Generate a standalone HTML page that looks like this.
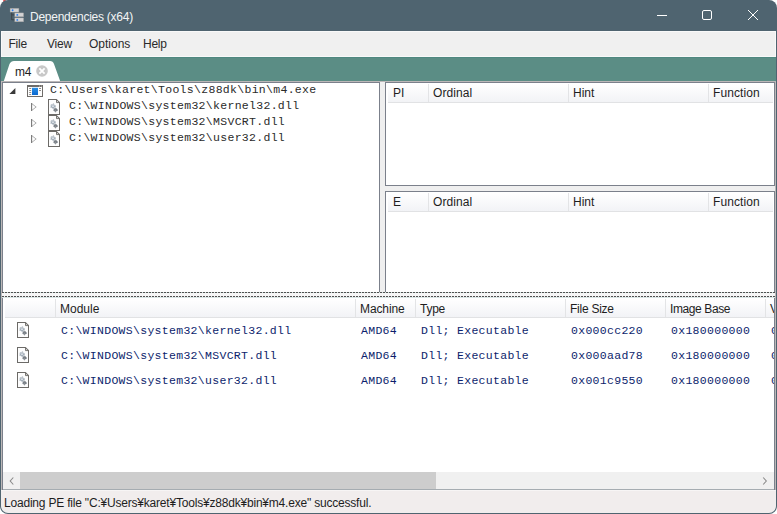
<!DOCTYPE html>
<html><head><meta charset="utf-8">
<style>
*{box-sizing:border-box}
html,body{margin:0;padding:0}
body{width:777px;height:514px;overflow:hidden;position:relative;background:#fff;font-family:"Liberation Sans",sans-serif;font-size:12px;color:#1e1e1e}
.a{position:absolute}
#win{left:0;top:0;width:777px;height:514px;background:#4f6470;border-radius:8px;overflow:hidden}
.ui{font-family:"Liberation Sans",sans-serif;font-size:12px;letter-spacing:-0.25px;white-space:nowrap;line-height:14px}
.mono{font-family:"Liberation Mono",monospace;font-size:11.5px;letter-spacing:0.3px;white-space:nowrap;line-height:14px}
.pane{background:#fff;border:1px solid #7b808b;border-bottom:none}
.hdr{background:linear-gradient(#ffffff,#f2f3f6);border-bottom:1px solid #e1e2e4;height:19px}
.vd{position:absolute;width:1px;height:18px;background:#e3e4e6}
</style></head><body>
<div class="a" style="left:3px;top:0;width:3px;height:2px;background:#e54b4b;border-radius:1px"></div>
<div id="win" class="a">
<div class="a ui" style="left:30px;top:9.5px;color:#f2f4f5">Dependencies (x64)</div>
<svg class="a" style="left:9px;top:8px" width="16" height="16" viewBox="0 0 16 16">
<path d="M2.7 4 V11.8 H5.8 M2.7 6.9 H5.8" fill="none" stroke="#3a3f44" stroke-width="0.9"/>
<rect x="1.1" y="0.3" width="8.8" height="3.8" fill="#d4d4d4" stroke="#9a9a9a" stroke-width="0.4"/>
<rect x="5.8" y="4.9" width="8.8" height="3.9" fill="#d4d4d4" stroke="#9a9a9a" stroke-width="0.4"/>
<rect x="5.8" y="9.9" width="8.8" height="3.9" fill="#d4d4d4" stroke="#9a9a9a" stroke-width="0.4"/>
<circle cx="3.6" cy="2.2" r="0.95" fill="#2a7ff0"/>
<circle cx="8.3" cy="6.9" r="0.95" fill="#2a7ff0"/>
<circle cx="8.3" cy="11.9" r="0.95" fill="#2a7ff0"/>
</svg>
<svg class="a" style="left:650px;top:0" width="127" height="30">
<path d="M7 15.5 H17" stroke="#fff" stroke-width="1"/>
<rect x="52.5" y="10.5" width="9" height="9" rx="1.5" fill="none" stroke="#fff" stroke-width="1"/>
<path d="M98 10 L108 20 M108 10 L98 20" stroke="#fff" stroke-width="1"/>
</svg>
<div class="a" style="left:1px;top:31px;width:775px;height:26px;background:#f0f0f0;border:1px solid #f9f9f9"></div>
<div class="a ui" style="left:8.5px;top:37px;color:#2a2a2a;letter-spacing:-0.25px">File</div>
<div class="a ui" style="left:47px;top:37px;color:#2a2a2a;letter-spacing:-0.25px">View</div>
<div class="a ui" style="left:89px;top:37px;color:#2a2a2a;letter-spacing:0px">Options</div>
<div class="a ui" style="left:143px;top:37px;color:#2a2a2a;letter-spacing:-0.25px">Help</div>
<div class="a" style="left:1px;top:57px;width:775px;height:24px;background:#5b8d85;border-top:1px solid #4f8880"></div>
<svg class="a" style="left:0;top:57px" width="80" height="25">
<path d="M3.5 25 L9.5 7 Q11 4 14 4 L50 4 Q53 4 54 7 L60.5 25 Z" fill="#fff"/>
</svg>
<div class="a ui" style="left:15px;top:65px;color:#1e1e1e">m4</div>
<svg class="a" style="left:36px;top:65px" width="12" height="12">
<circle cx="6" cy="6" r="5.8" fill="#c8c8c8"/>
<path d="M3.4 3.4 L8.6 8.6 M8.6 3.4 L3.4 8.6" stroke="#fff" stroke-width="1.8"/>
</svg>
<div class="a" style="left:1px;top:81px;width:775px;height:410px;background:#bcb8b8"></div>
<div class="a" style="left:2px;top:82px;width:773px;height:409px;background:#efefef"></div>
<div class="a pane" style="left:2px;top:82px;width:378px;height:210px"></div>
<div class="a pane" style="left:385px;top:82px;width:390px;height:104px;border-bottom:1px solid #7b808b"></div>
<div class="a pane" style="left:385px;top:191px;width:390px;height:101px"></div>
<div class="a pane" style="left:2px;top:297px;width:773px;height:194px;border-top:none;border-bottom:1px solid #8d959c"></div>
<div class="a" style="left:3px;top:489px;width:771px;height:1px;background:#a5acb1"></div>
<div class="a" style="left:2px;top:292px;width:773px;height:6px;background:#f6f6f6"></div>
<div class="a" style="left:2px;top:292px;width:773px;height:1px;background:repeating-linear-gradient(90deg,#505050 0 2px,#cfe3de 2px 3px)"></div>
<div class="a" style="left:2px;top:296px;width:773px;height:1px;background:repeating-linear-gradient(90deg,#505050 0 2px,#f0f0f0 2px 3px)"></div>
<div class="a" style="left:2px;top:297px;width:773px;height:1px;background:#dbe7e6"></div>
<div class="a hdr" style="left:388px;top:84px;width:385px"></div>
<div class="a ui" style="left:393px;top:86px;color:#1e1e1e;letter-spacing:0px">PI</div>
<div class="vd" style="left:428px;top:84px"></div>
<div class="a ui" style="left:433px;top:86px;color:#1e1e1e;letter-spacing:0.1px">Ordinal</div>
<div class="vd" style="left:568px;top:84px"></div>
<div class="a ui" style="left:573px;top:86px;color:#1e1e1e;letter-spacing:0px">Hint</div>
<div class="vd" style="left:708px;top:84px"></div>
<div class="a ui" style="left:713px;top:86px;color:#1e1e1e;letter-spacing:0.1px">Function</div>
<div class="a hdr" style="left:388px;top:193px;width:385px"></div>
<div class="a ui" style="left:393px;top:195px;color:#1e1e1e;letter-spacing:0px">E</div>
<div class="vd" style="left:428px;top:193px"></div>
<div class="a ui" style="left:433px;top:195px;color:#1e1e1e;letter-spacing:0.1px">Ordinal</div>
<div class="vd" style="left:568px;top:193px"></div>
<div class="a ui" style="left:573px;top:195px;color:#1e1e1e;letter-spacing:0px">Hint</div>
<div class="vd" style="left:708px;top:193px"></div>
<div class="a ui" style="left:713px;top:195px;color:#1e1e1e;letter-spacing:0.1px">Function</div>
<div class="a" style="left:5px;top:299px;width:769px;height:19px;overflow:hidden">
<div class="a hdr" style="left:0;top:0;width:769px"></div>
<div class="vd" style="left:50px;top:0"></div>
<div class="a ui" style="left:55px;top:3px;color:#1e1e1e;letter-spacing:0px">Module</div>
<div class="vd" style="left:350px;top:0"></div>
<div class="a ui" style="left:355px;top:3px;color:#1e1e1e;letter-spacing:-0.1px">Machine</div>
<div class="vd" style="left:410px;top:0"></div>
<div class="a ui" style="left:415px;top:3px;color:#1e1e1e;letter-spacing:-0.25px">Type</div>
<div class="vd" style="left:560px;top:0"></div>
<div class="a ui" style="left:565px;top:3px;color:#1e1e1e;letter-spacing:-0.25px">File Size</div>
<div class="vd" style="left:660px;top:0"></div>
<div class="a ui" style="left:665px;top:3px;color:#1e1e1e;letter-spacing:-0.4px">Image Base</div>
<div class="vd" style="left:760px;top:0"></div>
<div class="a ui" style="left:765px;top:3px;color:#1e1e1e;letter-spacing:-0.25px">Version</div>
</div>
<svg class="a" style="left:27px;top:85px" width="16" height="12" viewBox="0 0 16 12">
<rect x="0" y="0" width="16" height="12" fill="#6f6c69"/>
<rect x="1" y="2" width="14" height="9" fill="#fdfdfd"/>
<rect x="12" y="0.6" width="1" height="1" fill="#bdbab7"/>
<rect x="14" y="0.6" width="1" height="1" fill="#bdbab7"/>
<defs><linearGradient id="bl" x1="0" y1="0" x2="0" y2="1"><stop offset="0" stop-color="#2b8fe6"/><stop offset="1" stop-color="#0a68cf"/></linearGradient></defs>
<rect x="5" y="2.8" width="6" height="7.2" fill="url(#bl)"/>
<path d="M2.2 3.5h2M2.2 5.5h2M2.2 7.5h2M2.2 9.5h2M12 3.5h2M12 5.5h2" stroke="#8c8a88" stroke-width="1"/>
</svg>
<svg class="a" style="left:9px;top:88px" width="7" height="6"><path d="M0.4 5.9 L6.4 0 L6.4 5.9 Z" fill="#3a3a3a"/></svg>
<div class="a mono" style="left:50px;top:83px;color:#2a2a2a">C:\Users\karet\Tools\z88dk\bin\m4.exe</div>
<svg class="a" style="left:31px;top:103px" width="6" height="8"><path d="M0.6 0.5 L5.2 4 L0.6 7.5" fill="none" stroke="#b0b0b0" stroke-width="1"/><path d="M0.6 0 V8" stroke="#777" stroke-width="1.1"/></svg>
<svg class="a" style="left:48px;top:99px" width="12" height="16" viewBox="0 0 12 16"><path d="M0.5 0.5 H8.4 L11.5 3.6 V15.5 H0.5 Z" fill="#fdfdfd" stroke="#6c6a67" stroke-width="1.05"/><path d="M8.5 0.6 V3.6 H11.4 Z" fill="#dcdcdc" stroke="#6c6a67" stroke-width="0.9" stroke-linejoin="round"/><circle cx="5.0" cy="7.2" r="2.0" fill="#a3aeb9"/><circle cx="5.0" cy="7.2" r="2.35" fill="none" stroke="#a3aeb9" stroke-width="1" stroke-dasharray="1.23 1.23"/><circle cx="5.0" cy="7.2" r="0.85" fill="#e6eaee"/><circle cx="7.5" cy="11.0" r="1.4" fill="#5a626b"/><circle cx="7.5" cy="11.0" r="1.75" fill="none" stroke="#5a626b" stroke-width="1" stroke-dasharray="0.92 0.92"/><circle cx="7.5" cy="11.0" r="0.5" fill="#c8c8c8"/></svg>
<div class="a mono" style="left:69px;top:99px;color:#2a2a2a">C:\WINDOWS\system32\kernel32.dll</div>
<svg class="a" style="left:31px;top:119px" width="6" height="8"><path d="M0.6 0.5 L5.2 4 L0.6 7.5" fill="none" stroke="#b0b0b0" stroke-width="1"/><path d="M0.6 0 V8" stroke="#777" stroke-width="1.1"/></svg>
<svg class="a" style="left:48px;top:115px" width="12" height="16" viewBox="0 0 12 16"><path d="M0.5 0.5 H8.4 L11.5 3.6 V15.5 H0.5 Z" fill="#fdfdfd" stroke="#6c6a67" stroke-width="1.05"/><path d="M8.5 0.6 V3.6 H11.4 Z" fill="#dcdcdc" stroke="#6c6a67" stroke-width="0.9" stroke-linejoin="round"/><circle cx="5.0" cy="7.2" r="2.0" fill="#a3aeb9"/><circle cx="5.0" cy="7.2" r="2.35" fill="none" stroke="#a3aeb9" stroke-width="1" stroke-dasharray="1.23 1.23"/><circle cx="5.0" cy="7.2" r="0.85" fill="#e6eaee"/><circle cx="7.5" cy="11.0" r="1.4" fill="#5a626b"/><circle cx="7.5" cy="11.0" r="1.75" fill="none" stroke="#5a626b" stroke-width="1" stroke-dasharray="0.92 0.92"/><circle cx="7.5" cy="11.0" r="0.5" fill="#c8c8c8"/></svg>
<div class="a mono" style="left:69px;top:115px;color:#2a2a2a">C:\WINDOWS\system32\MSVCRT.dll</div>
<svg class="a" style="left:31px;top:135px" width="6" height="8"><path d="M0.6 0.5 L5.2 4 L0.6 7.5" fill="none" stroke="#b0b0b0" stroke-width="1"/><path d="M0.6 0 V8" stroke="#777" stroke-width="1.1"/></svg>
<svg class="a" style="left:48px;top:131px" width="12" height="16" viewBox="0 0 12 16"><path d="M0.5 0.5 H8.4 L11.5 3.6 V15.5 H0.5 Z" fill="#fdfdfd" stroke="#6c6a67" stroke-width="1.05"/><path d="M8.5 0.6 V3.6 H11.4 Z" fill="#dcdcdc" stroke="#6c6a67" stroke-width="0.9" stroke-linejoin="round"/><circle cx="5.0" cy="7.2" r="2.0" fill="#a3aeb9"/><circle cx="5.0" cy="7.2" r="2.35" fill="none" stroke="#a3aeb9" stroke-width="1" stroke-dasharray="1.23 1.23"/><circle cx="5.0" cy="7.2" r="0.85" fill="#e6eaee"/><circle cx="7.5" cy="11.0" r="1.4" fill="#5a626b"/><circle cx="7.5" cy="11.0" r="1.75" fill="none" stroke="#5a626b" stroke-width="1" stroke-dasharray="0.92 0.92"/><circle cx="7.5" cy="11.0" r="0.5" fill="#c8c8c8"/></svg>
<div class="a mono" style="left:69px;top:131px;color:#2a2a2a">C:\WINDOWS\system32\user32.dll</div>
<svg class="a" style="left:17px;top:322px" width="12" height="16" viewBox="0 0 12 16"><path d="M0.5 0.5 H8.4 L11.5 3.6 V15.5 H0.5 Z" fill="#fdfdfd" stroke="#6c6a67" stroke-width="1.05"/><path d="M8.5 0.6 V3.6 H11.4 Z" fill="#dcdcdc" stroke="#6c6a67" stroke-width="0.9" stroke-linejoin="round"/><circle cx="5.0" cy="7.2" r="2.0" fill="#a3aeb9"/><circle cx="5.0" cy="7.2" r="2.35" fill="none" stroke="#a3aeb9" stroke-width="1" stroke-dasharray="1.23 1.23"/><circle cx="5.0" cy="7.2" r="0.85" fill="#e6eaee"/><circle cx="7.5" cy="11.0" r="1.4" fill="#5a626b"/><circle cx="7.5" cy="11.0" r="1.75" fill="none" stroke="#5a626b" stroke-width="1" stroke-dasharray="0.92 0.92"/><circle cx="7.5" cy="11.0" r="0.5" fill="#c8c8c8"/></svg>
<div class="a mono" style="left:61px;top:324px;color:#0c1e6c">C:\WINDOWS\system32\kernel32.dll</div>
<div class="a mono" style="left:361px;top:324px;color:#0c1e6c">AMD64</div>
<div class="a mono" style="left:421px;top:324px;color:#0c1e6c">Dll; Executable</div>
<div class="a mono" style="left:571px;top:324px;color:#0c1e6c">0x000cc220</div>
<div class="a mono" style="left:671px;top:324px;color:#0c1e6c">0x180000000</div>
<div class="a" style="left:771px;top:324px;width:3px;height:15px;overflow:hidden"><div class="mono" style="color:#0c1e6c">0</div></div>
<svg class="a" style="left:17px;top:347px" width="12" height="16" viewBox="0 0 12 16"><path d="M0.5 0.5 H8.4 L11.5 3.6 V15.5 H0.5 Z" fill="#fdfdfd" stroke="#6c6a67" stroke-width="1.05"/><path d="M8.5 0.6 V3.6 H11.4 Z" fill="#dcdcdc" stroke="#6c6a67" stroke-width="0.9" stroke-linejoin="round"/><circle cx="5.0" cy="7.2" r="2.0" fill="#a3aeb9"/><circle cx="5.0" cy="7.2" r="2.35" fill="none" stroke="#a3aeb9" stroke-width="1" stroke-dasharray="1.23 1.23"/><circle cx="5.0" cy="7.2" r="0.85" fill="#e6eaee"/><circle cx="7.5" cy="11.0" r="1.4" fill="#5a626b"/><circle cx="7.5" cy="11.0" r="1.75" fill="none" stroke="#5a626b" stroke-width="1" stroke-dasharray="0.92 0.92"/><circle cx="7.5" cy="11.0" r="0.5" fill="#c8c8c8"/></svg>
<div class="a mono" style="left:61px;top:349px;color:#0c1e6c">C:\WINDOWS\system32\MSVCRT.dll</div>
<div class="a mono" style="left:361px;top:349px;color:#0c1e6c">AMD64</div>
<div class="a mono" style="left:421px;top:349px;color:#0c1e6c">Dll; Executable</div>
<div class="a mono" style="left:571px;top:349px;color:#0c1e6c">0x000aad78</div>
<div class="a mono" style="left:671px;top:349px;color:#0c1e6c">0x180000000</div>
<div class="a" style="left:771px;top:349px;width:3px;height:15px;overflow:hidden"><div class="mono" style="color:#0c1e6c">0</div></div>
<svg class="a" style="left:17px;top:372px" width="12" height="16" viewBox="0 0 12 16"><path d="M0.5 0.5 H8.4 L11.5 3.6 V15.5 H0.5 Z" fill="#fdfdfd" stroke="#6c6a67" stroke-width="1.05"/><path d="M8.5 0.6 V3.6 H11.4 Z" fill="#dcdcdc" stroke="#6c6a67" stroke-width="0.9" stroke-linejoin="round"/><circle cx="5.0" cy="7.2" r="2.0" fill="#a3aeb9"/><circle cx="5.0" cy="7.2" r="2.35" fill="none" stroke="#a3aeb9" stroke-width="1" stroke-dasharray="1.23 1.23"/><circle cx="5.0" cy="7.2" r="0.85" fill="#e6eaee"/><circle cx="7.5" cy="11.0" r="1.4" fill="#5a626b"/><circle cx="7.5" cy="11.0" r="1.75" fill="none" stroke="#5a626b" stroke-width="1" stroke-dasharray="0.92 0.92"/><circle cx="7.5" cy="11.0" r="0.5" fill="#c8c8c8"/></svg>
<div class="a mono" style="left:61px;top:374px;color:#0c1e6c">C:\WINDOWS\system32\user32.dll</div>
<div class="a mono" style="left:361px;top:374px;color:#0c1e6c">AMD64</div>
<div class="a mono" style="left:421px;top:374px;color:#0c1e6c">Dll; Executable</div>
<div class="a mono" style="left:571px;top:374px;color:#0c1e6c">0x001c9550</div>
<div class="a mono" style="left:671px;top:374px;color:#0c1e6c">0x180000000</div>
<div class="a" style="left:771px;top:374px;width:3px;height:15px;overflow:hidden"><div class="mono" style="color:#0c1e6c">0</div></div>
<div class="a" style="left:3px;top:472px;width:771px;height:17px;background:#f0f0f0"></div>
<div class="a" style="left:20px;top:472px;width:416px;height:17px;background:#cdcdcd"></div>
<svg class="a" style="left:8px;top:476px" width="8" height="10"><path d="M5.3 1.5 L2.2 5 L5.3 8.5" fill="none" stroke="#8a8a8a" stroke-width="1.1"/></svg>
<svg class="a" style="left:761px;top:476px" width="8" height="10"><path d="M2.2 1.5 L5.3 5 L2.2 8.5" fill="none" stroke="#8a8a8a" stroke-width="1.1"/></svg>
<div class="a" style="left:1px;top:490px;width:775px;height:23px;background:#f1eded;border-top:1px solid #f7f5f5;border-radius:0 0 7px 7px"></div>
<div class="a ui" style="left:4px;top:496px;color:#1e1e1e;letter-spacing:-0.2px">Loading PE file "C:&yen;Users&yen;karet&yen;Tools&yen;z88dk&yen;bin&yen;m4.exe" successful.</div>
</div>
</body></html>
